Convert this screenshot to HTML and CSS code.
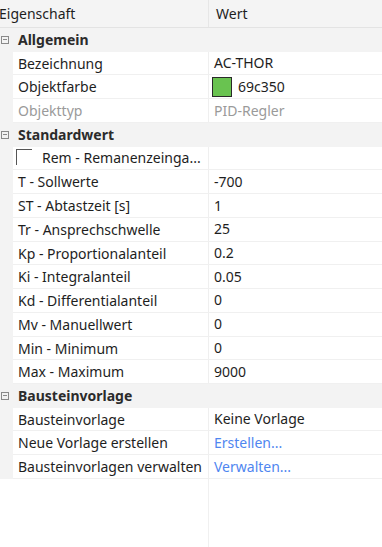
FILE: index.html
```html
<!DOCTYPE html>
<html lang="de">
<head>
  <meta charset="UTF-8">
  <title>Eigenschaften</title>
  <link rel="stylesheet" href="styles.css">
</head>
<body>
  <div class="grid">
    <div class="head">
      <div class="head-name">Eigenschaft</div>
      <div class="head-value">Wert</div>
    </div>

    <div class="cat"><span class="toggle"></span>Allgemein</div>
    <div class="row"><div class="name">Bezeichnung</div><div class="value">AC-THOR</div></div>
    <div class="row"><div class="name">Objektfarbe</div><div class="value"><span class="swatch"></span>69c350</div></div>
    <div class="row muted"><div class="name">Objekttyp</div><div class="value">PID-Regler</div></div>

    <div class="cat"><span class="toggle"></span>Standardwert</div>
    <div class="row"><div class="name check-name"><span class="check"></span>Rem - Remanenzeinga...</div><div class="value"></div></div>
    <div class="row"><div class="name">T - Sollwerte</div><div class="value">-700</div></div>
    <div class="row"><div class="name">ST - Abtastzeit [s]</div><div class="value">1</div></div>
    <div class="row"><div class="name">Tr - Ansprechschwelle</div><div class="value">25</div></div>
    <div class="row"><div class="name">Kp - Proportionalanteil</div><div class="value">0.2</div></div>
    <div class="row"><div class="name">Ki - Integralanteil</div><div class="value">0.05</div></div>
    <div class="row"><div class="name">Kd - Differentialanteil</div><div class="value">0</div></div>
    <div class="row"><div class="name">Mv - Manuellwert</div><div class="value">0</div></div>
    <div class="row"><div class="name">Min - Minimum</div><div class="value">0</div></div>
    <div class="row"><div class="name">Max - Maximum</div><div class="value">9000</div></div>

    <div class="cat"><span class="toggle"></span>Bausteinvorlage</div>
    <div class="row"><div class="name">Bausteinvorlage</div><div class="value">Keine Vorlage</div></div>
    <div class="row"><div class="name">Neue Vorlage erstellen</div><div class="value link">Erstellen...</div></div>
    <div class="row"><div class="name">Bausteinvorlagen verwalten</div><div class="value link">Verwalten...</div></div>

    <div class="filler"></div>
  </div>
</body>
</html>
```

FILE: styles.css
```css
html, body {
  margin: 0;
  padding: 0;
  background: #fff;
}
body {
  font-family: "Noto Sans", "Open Sans", sans-serif;
  font-size: 14px;
  color: #1e1e1e;
  overflow: hidden;
}
.grid {
  display: flex;
  flex-direction: column;
  height: 547px;
}
.head {
  display: flex;
  height: 27px;
  background: #f4f4f4;
  border-bottom: 1px solid #e3e3e3;
  flex-shrink: 0;
}
.head-name {
  width: 209px;
  margin-left: -1px;
  line-height: 28px;
  border-right: 1px solid #e6e6e6;
  flex-shrink: 0;
}
.head-value {
  padding-left: 7px;
  line-height: 28px;
}
.cat {
  display: flex;
  align-items: center;
  height: 23.74px;
  background: #f3f3f3;
  font-weight: bold;
  color: #2b2b2b;
  flex-shrink: 0;
}
.toggle {
  position: relative;
  width: 8px;
  height: 8px;
  border: 1px solid #8a8a8a;
  margin: 0 9px 0 1px;
  box-sizing: border-box;
}
.toggle::after {
  content: "";
  position: absolute;
  left: 1px;
  right: 1px;
  top: 2.5px;
  height: 1px;
  background: #8a8a8a;
}
.row {
  display: flex;
  height: 23.74px;
  margin-left: 13px;
  background: #fff;
  border-bottom: 1px solid #f0f0f0;
  box-sizing: border-box;
  flex-shrink: 0;
  position: relative;
}
.row::before {
  content: "";
  position: absolute;
  left: -13px;
  top: -1px;
  bottom: -1px;
  width: 13px;
  background: #f3f3f3;
}
.name {
  width: 196px;
  padding-left: 5px;
  box-sizing: border-box;
  border-right: 1px solid #efefef;
  line-height: 24px;
  white-space: nowrap;
  overflow: hidden;
  flex-shrink: 0;
}
.value {
  padding-left: 5px;
  line-height: 24px;
  display: flex;
  align-items: center;
  white-space: nowrap;
}
.muted {
  color: #9a9a9a;
}
.link {
  color: #4f86f0;
}
.swatch {
  width: 18px;
  height: 18px;
  background: #69c350;
  border: 1px solid #2a2a2a;
  margin-right: 6px;
  margin-left: -2px;
}
.check-name {
  display: flex;
  align-items: center;
  padding-left: 3px;
}
.check {
  width: 16px;
  height: 16px;
  border-top: 1px solid #555;
  border-left: 1px solid #555;
  box-sizing: border-box;
  margin-right: 10px;
  align-self: flex-start;
  margin-top: 2px;
}
.filler {
  flex: 1;
  margin-left: 208px;
  border-left: 1px solid #f0f0f0;
}
```
